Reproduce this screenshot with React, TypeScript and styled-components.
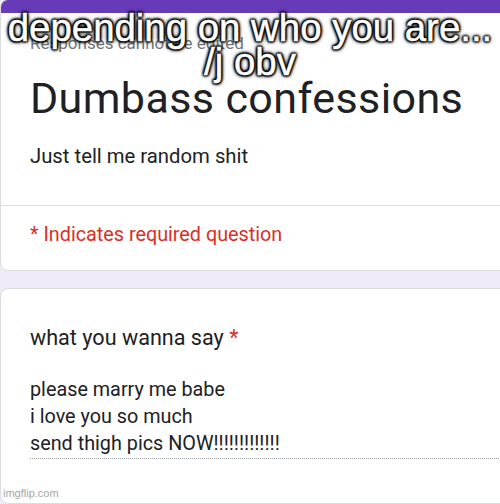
import styled, { createGlobalStyle } from "styled-components";

const GlobalStyle = createGlobalStyle`
  html, body {
    margin: 0;
    padding: 0;
    background: #f0ebf8;
    overflow: hidden;
  }
  #root {
    width: 500px;
    height: 504px;
  }
`;

const Page = styled.div`
  position: relative;
  width: 500px;
  height: 504px;
  overflow: hidden;
  background-color: #f0ebf8;
  font-family: Roboto, "Noto Sans", Arial, sans-serif;
  color: #202124;
`;

const Card = styled.div<{ $top?: boolean }>`
  width: 540px;
  background-color: #ffffff;
  border: 1px solid #dadce0;
  border-radius: 8px;
  margin-top: ${(p) => (p.$top ? "-1px" : "17px")};
  overflow: hidden;
`;

const PurpleBar = styled.div`
  height: 13px;
  background-color: #673ab7;
`;

const HeaderSection = styled.div`
  padding: 18px 0 35px 29px;
`;

const Notice = styled.p`
  margin: 0;
  font-size: 17px;
  line-height: 24px;
  color: #70757a;
`;

const FormTitle = styled.h1`
  margin: 17px 0 0 0;
  font-size: 43px;
  font-weight: 400;
  line-height: 52px;
  color: #202124;
  letter-spacing: 0.4px;
`;

const Description = styled.p`
  margin: 18px 0 0 0;
  font-size: 20.3px;
  line-height: 28px;
  color: #202124;
`;

const RequiredSection = styled.div`
  border-top: 1px solid #dadce0;
  padding: 15px 0 21px 29px;
`;

const RequiredText = styled.p`
  margin: 0;
  font-size: 19.8px;
  line-height: 28px;
  color: #d93025;
`;

const QuestionSection = styled.div`
  padding: 34px 0 44px 29px;
`;

const Question = styled.div`
  font-size: 21.6px;
  line-height: 30px;
`;

const Star = styled.span`
  color: #d93025;
`;

const Answer = styled.div`
  margin-top: 23px;
  padding-bottom: 1px;
  border-bottom: 1px dotted #9aa0a6;
`;

const AnswerLine = styled.div`
  font-size: 19.8px;
  line-height: 27px;
`;

const Caption = styled.div`
  position: absolute;
  top: 11px;
  left: 0;
  right: 0;
  text-align: center;
  font-family: "Liberation Sans", Arial, sans-serif;
  font-size: 38.4px;
  line-height: 34px;
  color: #ffffff;
  -webkit-text-stroke: 0.5px #ffffff;
  text-shadow: 0 0 3px #000, 0 0 3px #000, 0 0 4px #000, 0 0 5px #000,
    1px 1px 2px #000, -1px -1px 2px #000, 1px -1px 2px #000, -1px 1px 2px #000;
`;

const Watermark = styled.div`
  position: absolute;
  left: 3px;
  bottom: 5px;
  font-family: "Liberation Sans", Arial, sans-serif;
  font-size: 11px;
  line-height: 11px;
  color: #a6a6a6;
`;

const answerLines = [
  "please marry me babe",
  "i love you so much",
  "send thigh pics NOW!!!!!!!!!!!!!",
];

export default function App() {
  return (
    <Page>
      <GlobalStyle />
      <Card $top>
        <PurpleBar />
        <HeaderSection>
          <Notice>Responses cannot be edited</Notice>
          <FormTitle>Dumbass confessions</FormTitle>
          <Description>Just tell me random shit</Description>
        </HeaderSection>
        <RequiredSection>
          <RequiredText>* Indicates required question</RequiredText>
        </RequiredSection>
      </Card>
      <Card>
        <QuestionSection>
          <Question>
            what you wanna say <Star>*</Star>
          </Question>
          <Answer>
            {answerLines.map((line) => (
              <AnswerLine key={line}>{line}</AnswerLine>
            ))}
          </Answer>
        </QuestionSection>
      </Card>
      <Caption>
        depending on who you are...
        <br />
        /j obv
      </Caption>
      <Watermark>imgflip.com</Watermark>
    </Page>
  );
}
